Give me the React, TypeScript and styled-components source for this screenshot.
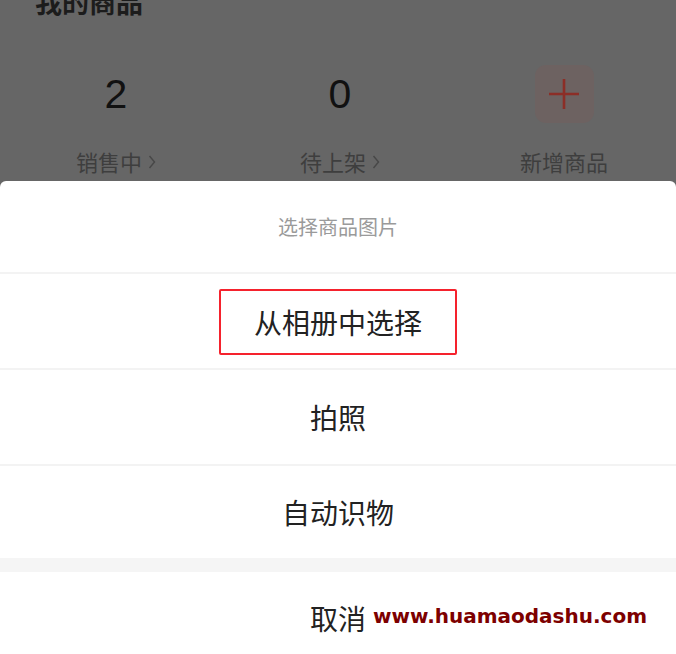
import React from 'react';
import styled, { createGlobalStyle } from 'styled-components';

const GlobalStyle = createGlobalStyle`
  html, body {
    margin: 0;
    padding: 0;
    overflow: hidden;
    background: #666666;
  }
  body {
    font-family: "Noto Sans CJK SC", "Noto Sans", sans-serif;
  }
`;

const stats = [
  { value: '2', label: '销售中', arrow: true },
  { value: '0', label: '待上架', arrow: true },
];

const options = ['从相册中选择', '拍照', '自动识物'];

const ChevronIcon = () => (
  <Chevron width="8" height="16" viewBox="0 0 8 16">
    <path d="M1.5 2 L6.5 8 L1.5 14" stroke="#474747" strokeWidth="1.4" fill="none" />
  </Chevron>
);

export default function App() {
  return (
    <>
      <GlobalStyle />
      <Page>
        <Heading>我的商品</Heading>
        <StatsRow>
          {stats.map(s => (
            <Stat key={s.label}>
              <StatTop>
                <StatValue>{s.value}</StatValue>
              </StatTop>
              <StatLabel>
                {s.label}
                {s.arrow && <ChevronIcon />}
              </StatLabel>
            </Stat>
          ))}
          <Stat>
            <StatTop>
              <AddBox>
                <svg width="32" height="32" viewBox="0 0 32 32">
                  <path d="M1 16 H31 M16 1 V31" stroke="#8c2e27" strokeWidth="2.6" fill="none" />
                </svg>
              </AddBox>
            </StatTop>
            <StatLabel>新增商品</StatLabel>
          </Stat>
        </StatsRow>

        <Sheet>
          <SheetTitle>选择商品图片</SheetTitle>
          {options.map((opt, i) => (
            <Option key={opt} $last={i === options.length - 1}>
              {i === 0 ? <Highlight>{opt}</Highlight> : opt}
            </Option>
          ))}
          <Gap />
          <Cancel>取消</Cancel>
        </Sheet>

        <Watermark>www.huamaodashu.com</Watermark>
      </Page>
    </>
  );
}

const Page = styled.div`
  position: relative;
  width: 676px;
  height: 654px;
  overflow: hidden;
  background: #666666;
`;

const Heading = styled.div`
  margin-top: -15px;
  padding-left: 35px;
  font-size: 27px;
  font-weight: 700;
  line-height: 34px;
  color: #1c1c1c;
`;

const StatsRow = styled.div`
  display: grid;
  grid-template-columns: repeat(3, 1fr);
  padding-left: 4px;
  margin-top: 46px;
`;

const Stat = styled.div`
  display: flex;
  flex-direction: column;
  align-items: center;
`;

const StatTop = styled.div`
  height: 58px;
  display: flex;
  align-items: center;
  justify-content: center;
`;

const StatValue = styled.div`
  font-family: "Liberation Sans", Arial, sans-serif;
  font-size: 41px;
  line-height: 58px;
  color: #111;
`;

const AddBox = styled.div`
  width: 59px;
  height: 58px;
  border-radius: 11px;
  background: #6d6261;
  display: flex;
  align-items: center;
  justify-content: center;
`;

const StatLabel = styled.div`
  margin-top: 24px;
  font-size: 22px;
  line-height: 28px;
  color: #3e3e3e;
  display: flex;
  align-items: center;
`;

const Chevron = styled.svg`
  margin-left: 6px;
  margin-top: 2px;
`;

const Sheet = styled.div`
  position: absolute;
  left: 0;
  right: 0;
  top: 181px;
  bottom: 0;
  background: #ffffff;
  border-radius: 6px 6px 0 0;
  display: flex;
  flex-direction: column;
`;

const SheetTitle = styled.div`
  height: 91px;
  flex-shrink: 0;
  display: flex;
  align-items: center;
  justify-content: center;
  font-size: 20px;
  color: #9a9a9a;
`;

const Option = styled.div<{ $last?: boolean }>`
  height: ${p => (p.$last ? 92 : 94)}px;
  flex-shrink: 0;
  border-top: 2px solid #f3f3f3;
  display: flex;
  align-items: center;
  justify-content: center;
  font-size: 28px;
  color: #222;
`;

const Highlight = styled.span`
  box-sizing: border-box;
  width: 238px;
  height: 66px;
  margin-top: 2px;
  border: 2px solid #f5222d;
  border-radius: 2px;
  display: flex;
  align-items: center;
  justify-content: center;
`;

const Gap = styled.div`
  height: 14px;
  flex-shrink: 0;
  background: #f5f5f5;
`;

const Cancel = styled.div`
  height: 92px;
  flex-shrink: 0;
  display: flex;
  align-items: center;
  justify-content: center;
  font-size: 28px;
  color: #222;
`;

const Watermark = styled.div`
  position: absolute;
  left: 373px;
  top: 606px;
  font-family: "DejaVu Sans", sans-serif;
  font-weight: 700;
  font-size: 20px;
  line-height: 20px;
  color: #7d0000;
  white-space: nowrap;
`;
